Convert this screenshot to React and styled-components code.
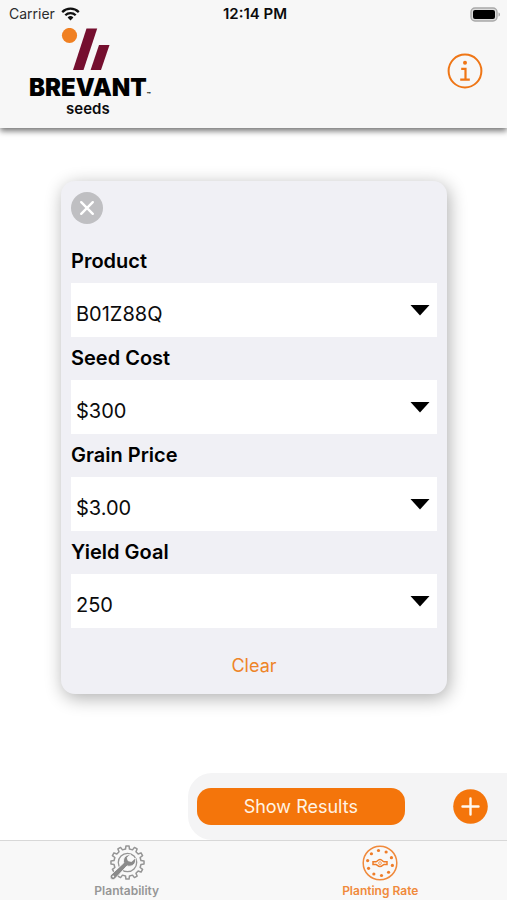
import React, { useState } from "react";
import styled, { createGlobalStyle } from "styled-components";

const ORANGE = "#f4750b";

const GlobalStyle = createGlobalStyle`
  * {
    box-sizing: border-box;
  }

  body {
    margin: 0;
    background: #ffffff;
    color: #0b0b0c;
    font-family: Inter, "Liberation Sans", sans-serif;
  }

  button,
  select {
    border: 0;
    border-radius: 0;
    color: inherit;
    font: inherit;
    margin: 0;
    padding: 0;
  }

  button {
    background: none;
    cursor: pointer;
  }
`;

const Screen = styled.div`
  display: flex;
  flex-direction: column;
  min-height: 100vh;
`;

const Header = styled.header`
  background: #f7f7f7;
  box-shadow: 0 3px 6px rgba(0, 0, 0, 0.55);
  padding-bottom: 12px;
`;

const StatusBar = styled.div`
  align-items: center;
  display: grid;
  font-size: 14px;
  grid-template-columns: 1fr auto 1fr;
  height: 28px;
  line-height: 20px;
  padding: 0 6px 0 9px;
`;

const Carrier = styled.div`
  align-items: center;
  color: #2c2c2e;
  display: flex;
  gap: 6px;
`;

const Clock = styled.time`
  font-size: 15px;
  font-weight: 600;
`;

const Battery = styled.svg`
  justify-self: end;
`;

const BrandRow = styled.div`
  align-items: flex-start;
  display: flex;
  justify-content: space-between;
  padding: 0 24px 0 29px;
`;

const Brand = styled.div`
  align-items: center;
  display: flex;
  flex-direction: column;
`;

const BrandName = styled.div`
  color: #000000;
  font-size: 24px;
  font-weight: 900;
  line-height: 28px;
  margin-top: 3px;
  position: relative;
  white-space: nowrap;
`;

const Trademark = styled.span`
  bottom: 4px;
  font-size: 6px;
  left: 100%;
  line-height: 6px;
  position: absolute;
`;

const BrandSub = styled.div`
  font-size: 15px;
  font-weight: 600;
  line-height: 14px;
`;

const InfoButton = styled.button`
  display: flex;
  margin-top: 25px;
`;

const Main = styled.main`
  flex: 1;
  padding: 53px 60px 40px 61px;
`;

const Card = styled.form`
  background: #f0f0f5;
  border-radius: 14px;
  box-shadow: 2px 4px 18px rgba(0, 0, 0, 0.32);
  display: flex;
  flex-direction: column;
  padding: 11px 10px 12px;
`;

const CloseButton = styled.button`
  align-self: flex-start;
  display: flex;
  margin-bottom: 16px;
`;

const Label = styled.label`
  color: #000000;
  font-size: 20px;
  font-weight: 600;
  line-height: 43px;
`;

const SelectBox = styled.div`
  background: #ffffff;
  position: relative;
`;

const Select = styled.select`
  appearance: none;
  background: transparent;
  display: block;
  font-size: 20px;
  height: 54px;
  outline: none;
  padding: 8px 36px 0 5px;
  width: 100%;
`;

const Arrow = styled.svg`
  pointer-events: none;
  position: absolute;
  right: 7px;
  top: 22px;
`;

const ClearButton = styled.button`
  align-self: center;
  color: #ee8427;
  font-size: 18px;
  line-height: 32px;
  margin-top: 22px;
  padding: 0 12px;
`;

const ActionBar = styled.div`
  align-items: center;
  align-self: flex-end;
  background: #f4f4f5;
  border-radius: 24px 0 0 24px;
  display: flex;
  gap: 48px;
  padding: 15px 19px 15px 9px;
  width: 63%;
`;

const ResultsButton = styled.button`
  background: ${ORANGE};
  border-radius: 14px;
  color: #fff3e4;
  flex: 1;
  font-size: 18px;
  line-height: 37px;
`;

const AddButton = styled.button`
  display: flex;
`;

const TabBar = styled.nav`
  background: #f8f8f8;
  border-top: 1px solid #d8d8d8;
  display: grid;
  grid-template-columns: 1fr 1fr;
`;

const Tab = styled.a`
  align-items: center;
  color: ${(props) => (props.$active ? "#f08a3c" : "#969696")};
  display: flex;
  flex-direction: column;
  font-size: 12px;
  font-weight: 600;
  gap: 2px;
  height: 59px;
  line-height: 16px;
  padding-top: 4px;
  text-decoration: none;
`;

const FIELDS = [
  { id: "product", label: "Product", options: ["B01Z88Q"] },
  { id: "seedCost", label: "Seed Cost", options: ["$300"] },
  { id: "grainPrice", label: "Grain Price", options: ["$3.00"] },
  { id: "yieldGoal", label: "Yield Goal", options: ["250"] },
];

const WifiIcon = () => (
  <svg width="19" height="14" viewBox="0 0 19 14" aria-hidden="true">
    <g fill="none" stroke="#111" strokeWidth="2.3">
      <path d="M1.2 5.1a11.8 11.8 0 0 1 16.6 0" />
      <path d="M4.3 8.3a7.4 7.4 0 0 1 10.4 0" />
    </g>
    <path d="M6.6 10.5a4.1 4.1 0 0 1 5.8 0L9.5 13.4z" fill="#111" />
  </svg>
);

const BatteryIcon = () => (
  <Battery width="31" height="15" viewBox="0 0 31 15" role="img" aria-label="Battery full">
    <rect x="1" y="1" width="26" height="13" rx="4" fill="#dcdcdc" stroke="#a9a9a9" strokeWidth="1.4" />
    <rect x="3" y="3" width="22" height="9" rx="2" fill="#000" />
    <path d="M28.5 5.5c2 .6 2 3.4 0 4z" fill="#a9a9a9" />
  </Battery>
);

const BrandMark = () => (
  <svg width="54" height="43" viewBox="0 0 54 43" aria-hidden="true">
    <circle cx="8.5" cy="7.5" r="7.6" fill="#f08022" />
    <path d="M25.5.5h10.7L22.5 42H12z" fill="#750f2f" />
    <path d="M38 17h10.5L40 42H29.6z" fill="#750f2f" />
  </svg>
);

const InfoIcon = () => (
  <svg width="36" height="36" viewBox="0 0 36 36" fill="none" stroke="#ef7616" aria-hidden="true">
    <circle cx="18" cy="18" r="16.4" strokeWidth="2" />
    <path d="M14.2 15.8h4.3v10.8M13.2 26.7h9.6" strokeWidth="2.2" />
    <circle cx="18" cy="9.8" r="2" fill="#ef7616" stroke="none" />
  </svg>
);

const CloseIcon = () => (
  <svg width="32" height="32" viewBox="0 0 32 32" aria-hidden="true">
    <circle cx="16" cy="16" r="16" fill="#bfbfc2" />
    <path d="M10.2 10.2l11.6 11.6M21.8 10.2L10.2 21.8" stroke="#fff" strokeWidth="2.4" strokeLinecap="round" />
  </svg>
);

const AddIcon = () => (
  <svg width="35" height="35" viewBox="0 0 35 35" aria-hidden="true">
    <circle cx="17.5" cy="17.5" r="17.3" fill={ORANGE} />
    <path d="M17.5 9.5v16M9.5 17.5h16" stroke="#fff8ee" strokeWidth="2.4" strokeLinecap="round" />
  </svg>
);

// twelve-tooth gear outline, radii in viewBox units
const gearPath = () => {
  const teeth = 12;
  const step = (Math.PI * 2) / teeth;
  const at = (r, a) =>
    `${(18.5 + r * Math.sin(a)).toFixed(2)} ${(17.5 - r * Math.cos(a)).toFixed(2)}`;
  let d = "";
  for (let i = 0; i < teeth; i += 1) {
    const a = i * step;
    d += `${i ? "L" : "M"}${at(13.6, a - step * 0.28)}L${at(16.6, a - step * 0.18)}`;
    d += `L${at(16.6, a + step * 0.18)}L${at(13.6, a + step * 0.28)}`;
  }
  return `${d}Z`;
};

const GearWrenchIcon = () => (
  <svg width="36" height="36" viewBox="0 0 36 36" aria-hidden="true">
    <g fill="none" stroke="#959595" strokeLinejoin="round">
      <path d={gearPath()} strokeWidth="1.5" />
      <circle cx="18.5" cy="17.5" r="9.2" strokeWidth="1.3" />
    </g>
    <path
      d="M20 9.800c-4.100.5-6.400 4.300-5.200 8L1.800 29.900c-2.300 2.500 1.500 6.500 4 4.100L18 20.900c3.900 1.300 7.900-1 8.600-4.900.2-1.200.1-2-.3-3l-3.700 3.500-3.500-.8-.9-3.200 3.500-2.700c-.6-.1-1.100-.1-1.700 0z"
      fill="#8a8a8a"
      stroke="#f8f8f8"
      strokeWidth="0.9"
    />
    <circle cx="4.200" cy="31.600" r="1" fill="#f8f8f8" />
  </svg>
);

const SeedPlateIcon = () => {
  const dots = Array.from({ length: 10 }, (_, i) => {
    const a = (i * Math.PI * 2) / 10 - Math.PI / 2 - 0.12;
    return [18 + 12.6 * Math.cos(a), 18 + 12.6 * Math.sin(a)];
  });
  return (
    <svg width="36" height="36" viewBox="0 0 36 36" aria-hidden="true">
      <circle cx="18" cy="18" r="16.8" fill="none" stroke="#f08a3c" strokeWidth="1.5" />
      {dots.map(([x, y]) => (
        <circle key={`${x}-${y}`} cx={x} cy={y} r="1.6" fill="#ef7d28" />
      ))}
      <path
        d="M11 16.8h2.800c1.300 0 1.900-2.200 4.200-2.200s2.900 2.200 4.200 2.200H25v2.600h-2.800c-1.300 0-1.900 2.200-4.200 2.200s-2.900-2.200-4.200-2.200H11z"
        fill="none"
        stroke="#ef7d28"
        strokeWidth="1.5"
      />
      <circle cx="18" cy="18.1" r="1.4" fill="none" stroke="#ef7d28" strokeWidth="0.7" />
    </svg>
  );
};

const Field = ({ id, label, options, value, onChange }) => (
  <>
    <Label htmlFor={id}>{label}</Label>
    <SelectBox>
      <Select id={id} value={value} onChange={(e) => onChange(e.target.value)}>
        <option value="" />
        {options.map((option) => (
          <option key={option} value={option}>
            {option}
          </option>
        ))}
      </Select>
      <Arrow width="20" height="11" viewBox="0 0 20 11" aria-hidden="true">
        <path d="M.5 0h19L10 10.5z" fill="#000" />
      </Arrow>
    </SelectBox>
  </>
);

const App = () => {
  const [values, setValues] = useState(() =>
    Object.fromEntries(FIELDS.map((field) => [field.id, field.options[0]]))
  );

  return (
    <Screen>
      <GlobalStyle />
      <Header>
        <StatusBar>
          <Carrier>
            Carrier
            <WifiIcon />
          </Carrier>
          <Clock>12:14 PM</Clock>
          <BatteryIcon />
        </StatusBar>
        <BrandRow>
          <Brand>
            <BrandMark />
            <BrandName>
              BREVANT<Trademark>™</Trademark>
            </BrandName>
            <BrandSub>seeds</BrandSub>
          </Brand>
          <InfoButton type="button" aria-label="Information">
            <InfoIcon />
          </InfoButton>
        </BrandRow>
      </Header>

      <Main>
        <Card onSubmit={(e) => e.preventDefault()}>
          <CloseButton type="button" aria-label="Close">
            <CloseIcon />
          </CloseButton>
          {FIELDS.map((field) => (
            <Field
              key={field.id}
              {...field}
              value={values[field.id]}
              onChange={(value) => setValues({ ...values, [field.id]: value })}
            />
          ))}
          <ClearButton
            type="button"
            onClick={() => setValues(Object.fromEntries(FIELDS.map((field) => [field.id, ""])))}
          >
            Clear
          </ClearButton>
        </Card>
      </Main>

      <ActionBar>
        <ResultsButton type="button">Show Results</ResultsButton>
        <AddButton type="button" aria-label="Add">
          <AddIcon />
        </AddButton>
      </ActionBar>

      <TabBar>
        <Tab href="#plantability">
          <GearWrenchIcon />
          Plantability
        </Tab>
        <Tab href="#planting-rate" $active aria-current="page">
          <SeedPlateIcon />
          Planting Rate
        </Tab>
      </TabBar>
    </Screen>
  );
};

export default App;
